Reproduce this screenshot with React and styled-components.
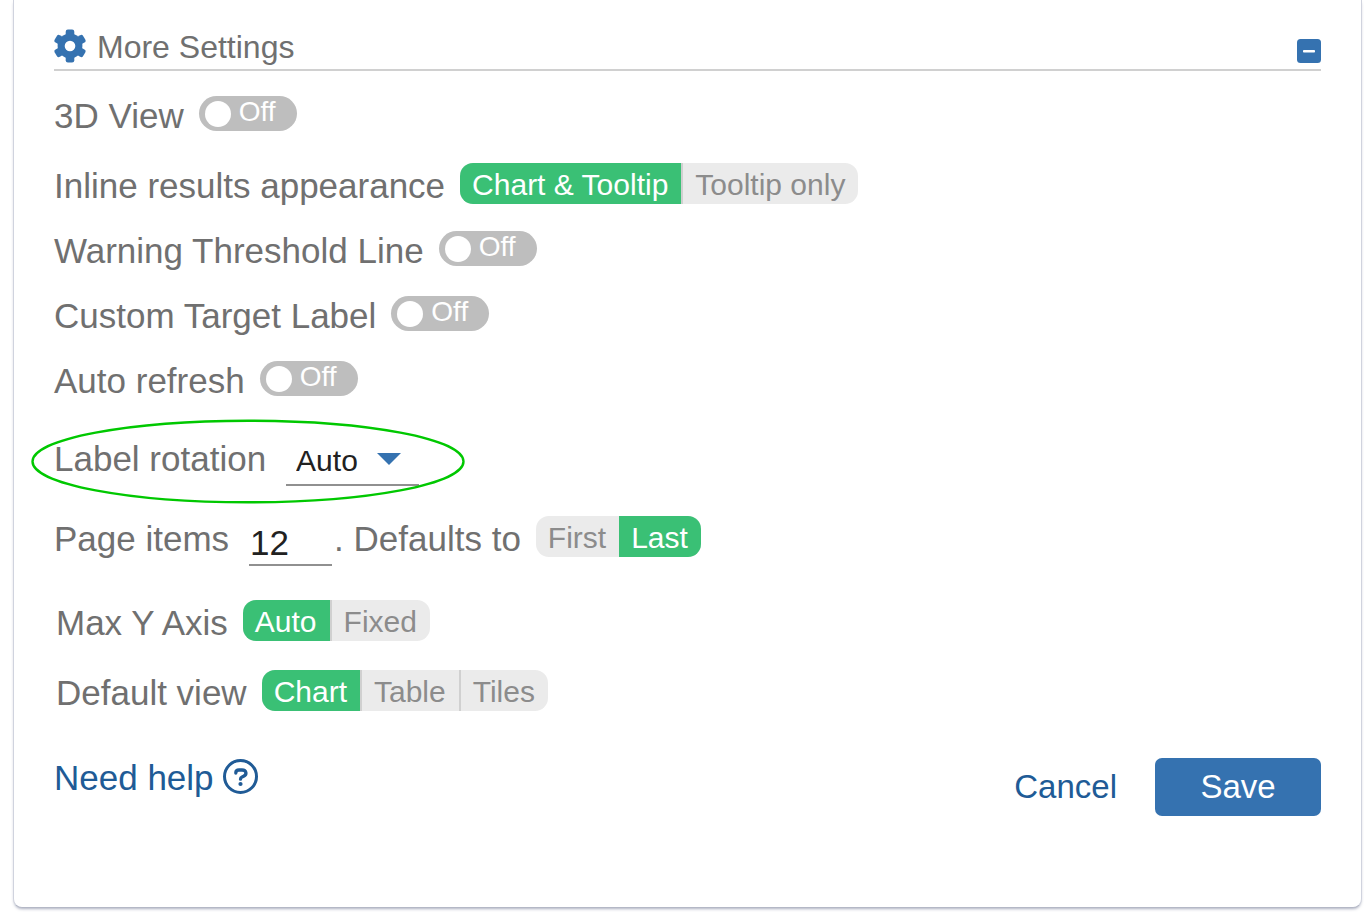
import React, { useState } from 'react'
import styled, { createGlobalStyle } from 'styled-components'

const GlobalStyle = createGlobalStyle`
  * {
    box-sizing: border-box;
  }
  body {
    margin: 0;
    background: #fff;
    color: #707070;
    font-family: "Liberation Sans", Arial, sans-serif;
  }
  button, input, select {
    font-family: inherit;
  }
`

const Card = styled.form`
  margin: 0 10px 10px 13px;
  padding: 28px 40px 91px;
  border: 1px solid #d0d3de;
  border-top: 0;
  border-bottom-color: #b4b8c6;
  border-radius: 0 0 9px 9px;
  box-shadow: 0 2px 3px -1px rgba(90, 98, 130, 0.5);
  background: #fff;
`

const Header = styled.header`
  display: flex;
  align-items: center;
  height: 43px;
  padding-bottom: 3px;
  margin-bottom: 22px;
  border-bottom: 2px solid #d0d0d0;
`

const GearIcon = styled.svg`
  width: 32px;
  height: 34px;
  margin-bottom: 3px;
`

const Title = styled.h2`
  flex: 1;
  margin: 0 0 0 11px;
  font-size: 32px;
  font-weight: 400;
  line-height: 40px;
`

const Collapse = styled.button`
  align-self: flex-end;
  width: 24px;
  height: 24px;
  margin-bottom: 3px;
  padding: 0;
  border: 0;
  background: none;
  cursor: pointer;

  svg {
    display: block;
  }
`

const Row = styled.div`
  display: flex;
  align-items: flex-start;
  width: fit-content;
  margin-bottom: ${(p) => p.$after || 22}px;
  padding-left: ${(p) => (p.$inset ? 2 : 0)}px;
  position: relative;
`

const Label = styled.label`
  padding-top: 3px;
  font-size: 35px;
  line-height: 40px;
  white-space: nowrap;
`

const HiddenInput = styled.input`
  position: absolute;
  opacity: 0;
  width: 1px;
  height: 1px;
  margin: 0;
`

const Switch = styled.label`
  display: flex;
  align-items: flex-start;
  width: 98px;
  height: 35px;
  margin: 3px 0 5px 15px;
  padding: 0 6px;
  gap: 8px;
  border-radius: 18px;
  background: ${(p) => (p.$on ? '#3ac075' : '#bebebe')};
  color: #fff;
  font-size: 28px;
  line-height: 31px;
  cursor: pointer;
`

const Knob = styled.span`
  width: 26px;
  height: 26px;
  margin-top: 5px;
  border-radius: 50%;
  background: #fff;
`

const Segments = styled.div`
  display: flex;
  height: 41px;
  margin-left: 15px;
  border-radius: 13px;
  background: #ebebeb;
  overflow: hidden;
`

const Segment = styled.label`
  padding: 0 13px 0 12px;
  border-left: ${(p) => (p.$divider ? '2px solid #d0d0d0' : '0')};
  background: ${(p) => (p.$active ? '#3ac075' : 'transparent')};
  color: ${(p) => (p.$active ? '#fff' : '#8c8c8c')};
  font-size: 30px;
  line-height: 43px;
  white-space: nowrap;
  cursor: pointer;
`

const SelectBox = styled.div`
  display: grid;
  align-items: center;
  width: 133px;
  height: 50px;
  margin-left: 20px;
  border-bottom: 2px solid #909090;

  > * {
    grid-area: 1 / 1;
  }
`

const Select = styled.select`
  width: 100%;
  height: 48px;
  padding: 1px 10px 0;
  border: 0;
  background: none;
  color: #212121;
  font-size: 30px;
  appearance: none;
`

const Caret = styled.svg`
  justify-self: end;
  margin-right: 18px;
  margin-bottom: 3px;
  pointer-events: none;
`

const Highlight = styled.svg`
  position: absolute;
  left: -23px;
  top: -17px;
  pointer-events: none;
`

const NumberInput = styled.input`
  width: 83px;
  height: 50px;
  margin: 0 2px 0 20px;
  padding: 6px 0 0 1px;
  border: 0;
  border-bottom: 2px solid #909090;
  background: none;
  color: #212121;
  font-size: 35px;
`

const Footer = styled.footer`
  display: flex;
  align-items: flex-start;
  margin-top: 45px;
`

const HelpLink = styled.a`
  display: flex;
  align-items: center;
  gap: 9px;
  margin-right: auto;
  color: #205b96;
  font-size: 35px;
  line-height: 40px;
  text-decoration: none;
`

const HelpIcon = styled.svg`
  width: 35px;
  height: 35px;
  margin-bottom: 4px;
`

const Button = styled.button`
  height: 58px;
  min-width: ${(p) => (p.$primary ? 166 : 0)}px;
  padding: 0;
  margin-left: 38px;
  border: 0;
  border-radius: 7px;
  background: ${(p) => (p.$primary ? '#3572b0' : 'none')};
  color: ${(p) => (p.$primary ? '#fff' : '#205b96')};
  font-size: 33px;
  cursor: pointer;
`

const ToggleRow = ({ id, label, after }) => {
  const [on, setOn] = useState(false)
  return (
    <Row $after={after}>
      <Label htmlFor={id}>{label}</Label>
      <Switch $on={on}>
        <HiddenInput type="checkbox" id={id} checked={on} onChange={() => setOn(!on)} />
        <Knob />
        {on ? 'On' : 'Off'}
      </Switch>
    </Row>
  )
}

const SegmentedControl = ({ name, label, options, initial }) => {
  const [value, setValue] = useState(initial)
  return (
    <Segments role="radiogroup" aria-label={label}>
      {options.map((option, i) => (
        <Segment key={option} $active={option === value} $divider={i > 0 && option !== value}>
          <HiddenInput
            type="radio"
            name={name}
            checked={option === value}
            onChange={() => setValue(option)}
          />
          {option}
        </Segment>
      ))}
    </Segments>
  )
}

const App = () => {
  return (
    <>
      <GlobalStyle />
      <Card onSubmit={(e) => e.preventDefault()}>
        <Header>
          <GearIcon viewBox="-16 -17 32 34" fill="#3572b0">
            <circle r="12.4" />
            <rect x="-4.3" y="-16.4" width="8.6" height="32.8" rx="2.2" />
            <rect x="-4.3" y="-16.4" width="8.6" height="32.8" rx="2.2" transform="rotate(60)" />
            <rect x="-4.3" y="-16.4" width="8.6" height="32.8" rx="2.2" transform="rotate(120)" />
            <circle r="5.3" fill="#fff" />
          </GearIcon>
          <Title>More Settings</Title>
          <Collapse type="button" aria-label="Collapse">
            <svg width="24" height="24" viewBox="0 0 24 24">
              <rect width="24" height="24" rx="3.5" fill="#3572b0" />
              <rect x="6" y="11" width="12" height="2.6" rx="0.8" fill="#fff" />
            </svg>
          </Collapse>
        </Header>

        <ToggleRow id="view3d" label="3D View" after={27} />
        <Row>
          <Label as="span">Inline results appearance</Label>
          <SegmentedControl
            name="inline"
            label="Inline results appearance"
            options={['Chart & Tooltip', 'Tooltip only']}
            initial="Chart & Tooltip"
          />
        </Row>
        <ToggleRow id="warning" label="Warning Threshold Line" />
        <ToggleRow id="target" label="Custom Target Label" />
        <ToggleRow id="refresh" label="Auto refresh" after={35} />

        <Row $after={30}>
          <Label htmlFor="rotation">Label rotation</Label>
          <SelectBox>
            <Select id="rotation" defaultValue="Auto">
              <option>Auto</option>
              <option>0</option>
              <option>45</option>
              <option>90</option>
            </Select>
            <Caret width="24" height="12" viewBox="0 0 24 12">
              <path d="M0 0H24L12 12Z" fill="#3572b0" />
            </Caret>
          </SelectBox>
          <Highlight width="434" height="86" viewBox="0 0 434 86" fill="none">
            <ellipse cx="217" cy="42.5" rx="215.5" ry="40.8" stroke="#00c800" strokeWidth="2.4" />
          </Highlight>
        </Row>

        <Row $after={34}>
          <Label htmlFor="items">Page items</Label>
          <NumberInput id="items" type="text" inputMode="numeric" defaultValue="12" />
          <Label as="span">. Defaults to</Label>
          <SegmentedControl name="page" label="Defaults to" options={['First', 'Last']} initial="Last" />
        </Row>
        <Row $inset $after={27}>
          <Label as="span">Max Y Axis</Label>
          <SegmentedControl name="axis" label="Max Y Axis" options={['Auto', 'Fixed']} initial="Auto" />
        </Row>
        <Row $inset>
          <Label as="span">Default view</Label>
          <SegmentedControl
            name="view"
            label="Default view"
            options={['Chart', 'Table', 'Tiles']}
            initial="Chart"
          />
        </Row>

        <Footer>
          <HelpLink href="#help">
            Need help
            <HelpIcon viewBox="0 0 35 35" fill="none" stroke="#205b96" aria-hidden="true">
              <circle cx="17.5" cy="17.5" r="16" strokeWidth="3" />
              <path
                d="M12.8 14C12.8 11.8 14.3 11 16 11H19C23.6 11 24.2 15.6 20.6 17.2L19 18C17.9 18.5 17.5 19 17.5 20.2"
                strokeWidth="3.3"
                strokeLinecap="round"
              />
              <circle cx="17.5" cy="25" r="2.1" fill="#205b96" stroke="none" />
            </HelpIcon>
          </HelpLink>
          <Button type="button">Cancel</Button>
          <Button type="submit" $primary>Save</Button>
        </Footer>
      </Card>
    </>
  )
}

export default App
